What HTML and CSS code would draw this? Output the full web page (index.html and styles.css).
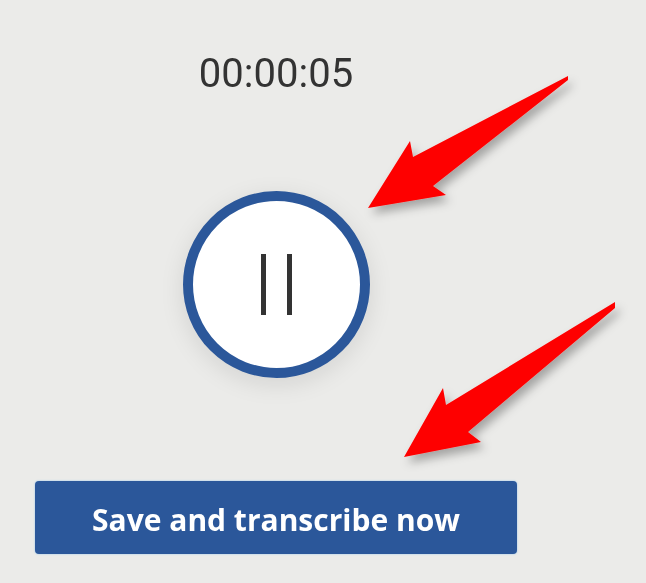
FILE: index.html
```html
<!DOCTYPE html>
<html lang="en">
<head>
<meta charset="utf-8">
<title>Record</title>
<link rel="stylesheet" href="styles.css">
</head>
<body>
<main class="panel">
  <div class="timer">00:00:05</div>
  <button class="pause" type="button" aria-label="Pause">
    <span class="bar"></span>
    <span class="bar"></span>
  </button>
  <button class="save" type="button">Save and transcribe now</button>
</main>
<svg class="arrows" width="646" height="583" viewBox="0 0 646 583" aria-hidden="true">
  <defs>
    <filter id="shadow" x="-20%" y="-20%" width="150%" height="150%">
      <feGaussianBlur in="SourceGraphic" stdDeviation="0.5" result="soft"/>
      <feDropShadow in="soft" dx="4" dy="6" stdDeviation="5" flood-color="#000" flood-opacity="0.3"/>
    </filter>
  </defs>
  <path class="arrow" filter="url(#shadow)" d="M568 76 L413 157 L410 141 L368 208 L446 195 L433 186 L568 80 Z"/>
  <path class="arrow" filter="url(#shadow)" d="M615 302 L446 405 L443 388 L404 457 L481 442 L468 432 L615 308 Z"/>
</svg>
</body>
</html>
```
FILE: styles.css
```css
html, body {
  margin: 0;
  padding: 0;
}

body {
  width: 646px;
  height: 583px;
  overflow: hidden;
  background: #ebebe9;
  position: relative;
}

.panel {
  width: 482px;
  margin-left: 35px;
  padding-top: 50px;
  display: flex;
  flex-direction: column;
  align-items: center;
}

.timer {
  width: 482px;
  text-align: center;
  font-family: Roboto, "Liberation Sans", sans-serif;
  font-size: 40px;
  line-height: 47px;
  color: #333;
  filter: blur(0.7px);
}

.pause {
  margin: 94px 0 0 1px;
  width: 187px;
  height: 187px;
  box-sizing: border-box;
  border: 10px solid #2b579a;
  border-radius: 50%;
  background: #fff;
  box-shadow: 0 6px 24px rgba(0, 0, 0, 0.1);
  display: flex;
  align-items: center;
  justify-content: center;
  gap: 21px;
  padding: 0;
  filter: blur(0.5px);
}

.bar {
  width: 5px;
  height: 61px;
  background: #333;
}

.save {
  margin-top: 103px;
  width: 482px;
  height: 73px;
  border: 0;
  border-radius: 4px;
  background: #2b579a;
  color: #fff;
  font-family: "Open Sans", "Liberation Sans", sans-serif;
  font-weight: 700;
  font-size: 30px;
  line-height: 1;
  padding: 4px 0 0;
  box-shadow: 0 0 2px #8fc0ec;
  filter: blur(0.6px);
}

.arrows {
  position: absolute;
  left: 0;
  top: 0;
  pointer-events: none;
}

.arrow {
  fill: #fe0000;
}
```
